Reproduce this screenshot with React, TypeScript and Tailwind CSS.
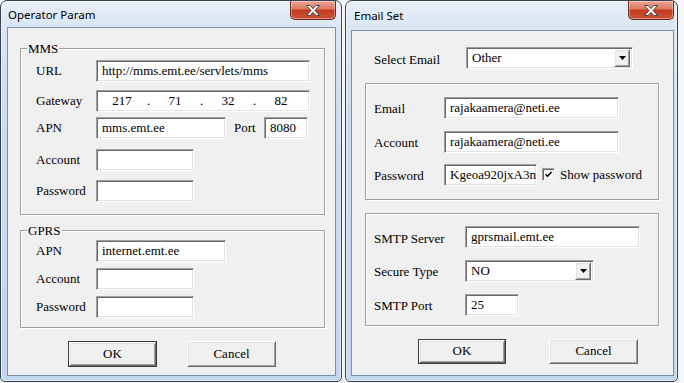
import React from "react";

const serif = "font-['Liberation_Serif','Times_New_Roman',serif] text-[13px] text-black";
const sunken =
  "border border-[#a0a0a0] border-b-white border-r-white bg-white shadow-[inset_1px_1px_0_#696969,inset_-1px_-1px_0_#e3e3e3]";
const raised =
  "border border-t-white border-l-white border-b-[#696969] border-r-[#696969] bg-[#f0f0f0] shadow-[inset_1px_1px_0_#e3e3e3,inset_-1px_-1px_0_#a0a0a0]";
const etched = "relative shrink-0 border border-[#a0a0a0] shadow-[inset_1px_1px_0_#fff,1px_1px_0_#fff]";

function Field({ w, children }: { w: string; children?: React.ReactNode }) {
  return (
    <div className={`flex h-[22px] shrink-0 items-center overflow-hidden whitespace-nowrap pl-[5px] ${sunken} ${w}`}>
      {children}
    </div>
  );
}

function Combo({ w, value }: { w: string; value: string }) {
  return (
    <div className={`flex h-[22px] shrink-0 items-center p-[2px] ${sunken} ${w}`}>
      <span className="flex-1 pl-[3px]">{value}</span>
      <div className={`flex h-[18px] w-[16px] items-center justify-center ${raised}`}>
        <svg width="7" height="4" viewBox="0 0 7 4">
          <path d="M0 0h7L3.5 4z" fill="#000" />
        </svg>
      </div>
    </div>
  );
}

function Btn({ label, def, w, h }: { label: string; def?: boolean; w: string; h: string }) {
  return (
    <div className={`shrink-0 ${def ? "border border-[#3c3c3c]" : ""} ${w} ${h}`}>
      <div className={`flex h-full w-full items-center justify-center ${raised}`}>{label}</div>
    </div>
  );
}

function Row({ label, lw, className, children }: { label: string; lw: string; className: string; children: React.ReactNode }) {
  return (
    <div className={`flex items-center whitespace-nowrap ${className}`}>
      <span className={`shrink-0 ${lw}`}>{label}</span>
      {children}
    </div>
  );
}

function Close() {
  return (
    <div className="flex h-[19px] w-[46px] shrink-0 items-center justify-center rounded-b-[5px] border border-t-0 border-[#6e2a1f] bg-[linear-gradient(180deg,#eba596_0%,#dc7b64_42%,#c23a22_52%,#cc5438_100%)] shadow-[inset_0_0_0_1px_rgba(255,255,255,0.35)]">
      <svg width="16" height="13" viewBox="0 0 16 13">
        <path
          d="M1.5 1.5h3.6l2.9 3.2 2.9-3.2h3.6l-4.6 5 4.6 5h-3.6l-2.9-3.2-2.9 3.2h-3.6l4.6-5z"
          fill="#fff"
          stroke="#3e3e3e"
          strokeWidth="0.9"
          strokeLinejoin="round"
        />
      </svg>
    </div>
  );
}

function Win({
  title,
  w,
  titleCls,
  closeCls,
  children,
}: {
  title: string;
  w: string;
  titleCls: string;
  closeCls: string;
  children: React.ReactNode;
}) {
  return (
    <div
      className={`flex h-[382px] shrink-0 flex-col rounded-t-[7px] rounded-b-[5px] border border-[#38414c] bg-[linear-gradient(180deg,#e8eff8_0px,#d9e6f4_28px,#c9dcf1_120px,#c2d8f0_100%)] shadow-[inset_0_0_0_1px_rgba(255,255,255,0.55)] ${w}`}
    >
      <div className="flex shrink-0 items-start justify-between">
        <span className={`font-['Noto_Sans','Open_Sans',sans-serif] text-[11.5px] leading-[16px] text-black ${titleCls}`}>{title}</span>
        <div className={closeCls}>
          <Close />
        </div>
      </div>
      {children}
    </div>
  );
}

function OperatorParam() {
  return (
    <Win title="Operator Param" w="w-[342px]" titleCls="pl-[7px] pt-[6px]" closeCls="mr-[5px]">
      <div className={`ml-[6px] mt-[4px] flex h-[349px] w-[329px] flex-col border border-[#7d8fa5] bg-[#f0f0f0] ${serif}`}>
        <div className={`ml-[12px] mt-[20px] h-[167px] w-[305px] pl-[15px] ${etched}`}>
          <span className="absolute left-[6px] top-[-8px] bg-[#f0f0f0] px-[1px] leading-[15px]">MMS</span>
          <Row label="URL" lw="w-[60px]" className="mt-[11px]">
            <Field w="w-[214px]">http://mms.emt.ee/servlets/mms</Field>
          </Row>
          <Row label="Gateway" lw="w-[60px]" className="mt-[8px]">
            <Field w="w-[214px]">
              <div className="flex pl-[2px]">
                <span className="w-[36px] text-center">217</span>
                <span className="w-[17px] text-center">.</span>
                <span className="w-[36px] text-center">71</span>
                <span className="w-[17px] text-center">.</span>
                <span className="w-[36px] text-center">32</span>
                <span className="w-[17px] text-center">.</span>
                <span className="w-[36px] text-center">82</span>
              </div>
            </Field>
          </Row>
          <Row label="APN" lw="w-[60px]" className="mt-[5px]">
            <Field w="w-[130px]">mms.emt.ee</Field>
            <span className="ml-[8px] w-[30px]">Port</span>
            <Field w="w-[44px]">8080</Field>
          </Row>
          <Row label="Account" lw="w-[60px]" className="mt-[10px]">
            <Field w="w-[98px]" />
          </Row>
          <Row label="Password" lw="w-[60px]" className="mt-[9px]">
            <Field w="w-[98px]" />
          </Row>
        </div>

        <div className={`ml-[12px] mt-[15px] h-[98px] w-[305px] pl-[15px] ${etched}`}>
          <span className="absolute left-[6px] top-[-8px] bg-[#f0f0f0] px-[1px] leading-[15px]">GPRS</span>
          <Row label="APN" lw="w-[60px]" className="mt-[9px]">
            <Field w="w-[130px]">internet.emt.ee</Field>
          </Row>
          <Row label="Account" lw="w-[60px]" className="mt-[6px]">
            <Field w="w-[98px]" />
          </Row>
          <Row label="Password" lw="w-[60px]" className="mt-[6px]">
            <Field w="w-[98px]" />
          </Row>
        </div>

        <div className="mt-[13px] flex gap-[30px] pl-[60px]">
          <Btn label="OK" def w="w-[89px]" h="h-[26px]" />
          <Btn label="Cancel" w="w-[89px]" h="h-[26px]" />
        </div>
      </div>
    </Win>
  );
}

function EmailSet() {
  return (
    <Win title="Email Set" w="w-[333px]" titleCls="pl-[8px] pt-[7px]" closeCls="mr-[3px]">
      <div className={`ml-[5px] mt-[6px] flex h-[346px] w-[323px] flex-col border border-[#7d8fa5] bg-[#f0f0f0] ${serif}`}>
        <Row label="Select Email" lw="w-[92px] pt-[4px]" className="mt-[15px] pl-[22px]">
          <Combo w="w-[167px]" value="Other" />
        </Row>

        <div className={`ml-[13px] mt-[13px] h-[117px] w-[294px] pl-[8px] ${etched}`}>
          <Row label="Email" lw="w-[70px] pt-[2px]" className="mt-[13px]">
            <Field w="w-[175px]">rajakaamera@neti.ee</Field>
          </Row>
          <Row label="Account" lw="w-[70px] pt-[2px]" className="mt-[12px]">
            <Field w="w-[175px]">rajakaamera@neti.ee</Field>
          </Row>
          <Row label="Password" lw="w-[70px] pt-[2px]" className="mt-[11px]">
            <Field w="w-[93px]">Kgeoa920jxA3mQ</Field>
            <div className={`ml-[5px] flex h-[13px] w-[13px] items-center justify-center ${sunken}`}>
              <svg width="7" height="7" viewBox="0 0 7 7">
                <path d="M0.5 3.2l2 2 4-4.2" fill="none" stroke="#000" strokeWidth="1.6" />
              </svg>
            </div>
            <span className="ml-[5px]">Show password</span>
          </Row>
        </div>

        <div className={`ml-[13px] mt-[13px] h-[113px] w-[294px] pl-[8px] ${etched}`}>
          <Row label="SMTP Server" lw="w-[91px] pt-[3px]" className="mt-[12px]">
            <Field w="w-[175px]">gprsmail.emt.ee</Field>
          </Row>
          <Row label="Secure Type" lw="w-[91px] pt-[2px]" className="mt-[12px]">
            <Combo w="w-[129px]" value="NO" />
          </Row>
          <Row label="SMTP Port" lw="w-[91px] pt-[2px]" className="mt-[12px]">
            <Field w="w-[54px]">25</Field>
          </Row>
        </div>

        <div className="mt-[13px] flex gap-[43px] pl-[66px]">
          <Btn label="OK" def w="w-[88px]" h="h-[25px]" />
          <Btn label="Cancel" w="w-[89px]" h="h-[25px]" />
        </div>
      </div>
    </Win>
  );
}

export default function App() {
  return (
    <div className="flex h-[383px] w-[684px] gap-[3px] overflow-hidden bg-[#f4f6f9]">
      <OperatorParam />
      <EmailSet />
    </div>
  );
}
